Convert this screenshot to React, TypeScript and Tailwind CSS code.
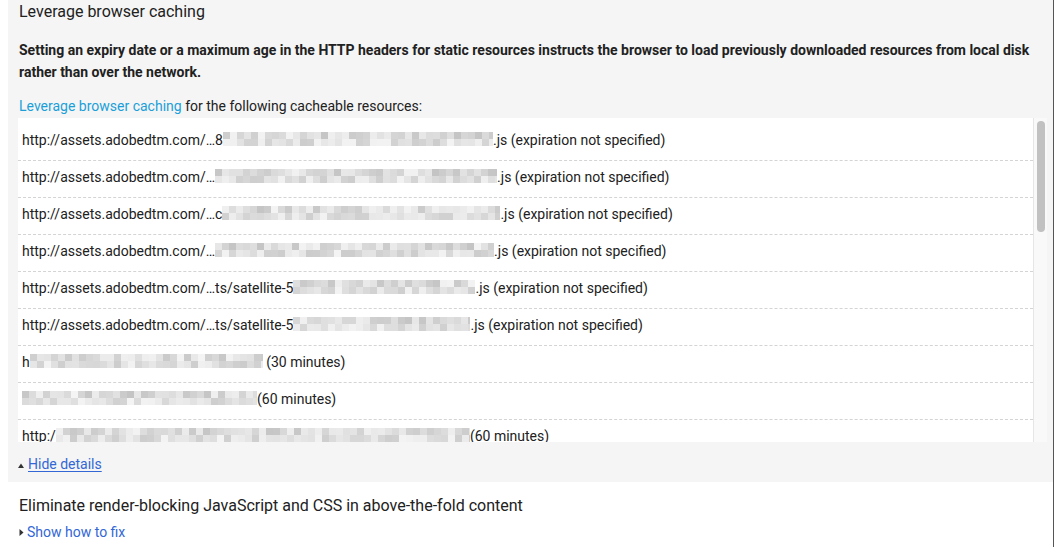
import React from 'react';

type Row = { pre: string; blur: number; post: string };

const rows: Row[] = [
  { pre: 'http://assets.adobedtm.com/…8', blur: 270, post: '.js (expiration not specified)' },
  { pre: 'http://assets.adobedtm.com/…', blur: 282, post: '.js (expiration not specified)' },
  { pre: 'http://assets.adobedtm.com/…c', blur: 278, post: '.js (expiration not specified)' },
  { pre: 'http://assets.adobedtm.com/…', blur: 279, post: '.js (expiration not specified)' },
  { pre: 'http://assets.adobedtm.com/…ts/satellite-5', blur: 182, post: '.js (expiration not specified)' },
  { pre: 'http://assets.adobedtm.com/…ts/satellite-5', blur: 177, post: '.js (expiration not specified)' },
  { pre: 'h', blur: 233, post: '\u00a0(30 minutes)' },
  { pre: '', blur: 235, post: '(60 minutes)' },
  { pre: 'http:/', blur: 414, post: '(60 minutes)' },
];

// pixelated "redacted" strip, two rows of grey cells
const Blur = ({ width, seed }: { width: number; seed: number }) => {
  let s = seed * 9301 + 49297;
  const rand = () => {
    s = (s * 9301 + 49297) % 233280;
    return s / 233280;
  };
  const cols = Math.ceil(width / 7);
  const cells = (row: number) =>
    Array.from({ length: cols }, (_, i) => {
      const g = Math.round(row === 0 ? 196 + rand() * 48 : 204 + rand() * 40);
      return (
        <span
          key={i}
          className="block h-full shrink-0"
          style={{ width: 7, background: `rgb(${g},${g},${g})` }}
        />
      );
    });
  return (
    <span
      className="inline-flex flex-col overflow-hidden align-middle h-[14px] -mt-[2px]"
      style={{ width }}
    >
      <span className="flex h-[7px]">{cells(0)}</span>
      <span className="flex h-[7px]">{cells(1)}</span>
    </span>
  );
};

const UpArrow = () => (
  <svg width="6" height="5" viewBox="0 0 6 5" className="mr-[4px] mt-[2px]">
    <path d="M0 5 L3 0.5 L6 5 Z" fill="#333" />
  </svg>
);

const RightArrow = () => (
  <svg width="5" height="7" viewBox="0 0 5 7" className="mr-[3px]">
    <path d="M0.5 0 L4.5 3.5 L0.5 7 Z" fill="#333" />
  </svg>
);

export default function App() {
  return (
    <div
      className="w-[1054px] h-[547px] bg-white text-[#212121] overflow-hidden border-r border-[#555]"
      style={{ fontFamily: 'Roboto, "Liberation Sans", sans-serif' }}
    >
      <div className="ml-[8px] bg-[#f5f5f5] pt-[1px] pb-[9px]">
        <h2 className="pl-[11px] text-[16px] leading-[22px] font-normal">Leverage browser caching</h2>
        <p className="pl-[11px] pr-[14px] mt-[16px] text-[14px] leading-[22px] font-bold">
          Setting an expiry date or a maximum age in the HTTP headers for static resources instructs the browser to load previously downloaded resources from local disk rather than over the network.
        </p>
        <p className="pl-[11px] mt-[13px] text-[14px] leading-[20px]">
          <a className="text-[#1a9fd9]">Leverage browser caching</a> for the following cacheable resources:
        </p>
        <div className="ml-[10px] mr-[6px] mt-[2px] h-[324px] bg-white flex overflow-hidden">
          <ul className="flex-1 pt-[6px] text-[14px]">
            {rows.map((r, i) => (
              <li
                key={i}
                className="h-[37px] pl-[4px] border-b border-dashed border-[#d4d4d4] flex items-center whitespace-nowrap pb-[4px]"
              >
                <span>{r.pre}</span>
                <Blur width={r.blur} seed={i + 3} />
                <span>{r.post}</span>
              </li>
            ))}
          </ul>
          <div className="w-[14px] border-l border-[#e6e6e6] bg-[#f9f9f9] pt-[3px] flex justify-center">
            <div className="w-[8px] h-[111px] rounded-full bg-[#c1c1c1]" />
          </div>
        </div>
        <div className="flex items-center pl-[10px] mt-[13px] text-[14px] leading-[18px]">
          <UpArrow />
          <a className="text-[#3367d6] underline underline-offset-2">Hide details</a>
        </div>
      </div>
      <div className="pl-[19px] pt-[13px]">
        <h2 className="text-[16px] leading-[22px] font-normal">
          Eliminate render-blocking JavaScript and CSS in above-the-fold content
        </h2>
        <div className="flex items-center mt-[6px] text-[14px] leading-[18px]">
          <RightArrow />
          <a className="text-[#3367d6]">Show how to fix</a>
        </div>
      </div>
    </div>
  );
}
